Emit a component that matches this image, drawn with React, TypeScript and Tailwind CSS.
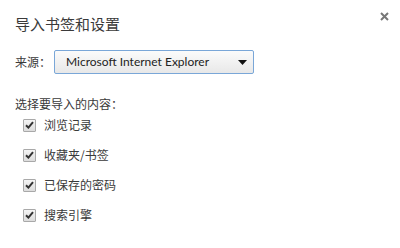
import { useState } from "react";

const items = ["浏览记录", "收藏夹/书签", "已保存的密码", "搜索引擎"];

function CheckIcon() {
  return (
    <svg width="9" height="8" viewBox="0 0 9 8" className="block">
      <path d="M1 4.2 L3.4 6.6 L8 1.2" fill="none" stroke="#333" strokeWidth="2" />
    </svg>
  );
}

export default function App() {
  const [checked, setChecked] = useState<boolean[]>([true, true, true, true]);

  const toggle = (i: number) => {
    setChecked(checked.map((c, j) => (j === i ? !c : c)));
  };

  return (
    <div className="relative w-[400px] h-[248px] bg-white text-[#3a3a3a] pt-[14px] px-[15px] font-['Noto_Sans_CJK_SC',sans-serif]">
      {/* close */}
      <button className="absolute top-[11px] right-[11px] w-[10px] h-[10px] flex items-center justify-center">
        <svg width="9" height="9" viewBox="0 0 9 9">
          <path d="M1 1 L8 8 M8 1 L1 8" stroke="#777" strokeWidth="2" />
        </svg>
      </button>

      <div className="text-[15px] leading-[20px]">导入书签和设置</div>

      {/* source */}
      <div className="mt-[16px] flex items-center h-[24px] text-[12px]">
        <span className="w-[39px]">来源：</span>
        <div className="w-[200px] h-[24px] flex items-center justify-between border border-[#7aa7d8] rounded-[2px] bg-gradient-to-b from-[#fbfbfb] to-[#e8e8e8] pl-[11px] pr-[6px]">
          <span className="text-[12px] text-[#222] font-['Lato',sans-serif]">Microsoft Internet Explorer</span>
          <svg width="9" height="5" viewBox="0 0 9 5">
            <path d="M0 0 H9 L4.5 5 Z" fill="#111" />
          </svg>
        </div>
      </div>

      <div className="mt-[22px] text-[12px] leading-[15px]">选择要导入的内容：</div>

      <div className="mt-[-1px] flex flex-col">
        {items.map((label, i) => (
          <label key={label} className="h-[30px] flex items-center pl-[8px] text-[12px] cursor-pointer">
            <span
              onClick={() => toggle(i)}
              className="w-[13px] h-[13px] flex items-center justify-center border border-[#a9a9a9] rounded-[1px] bg-gradient-to-b from-[#f4f4f4] to-[#dcdcdc]"
            >
              {checked[i] && <CheckIcon />}
            </span>
            <span className="ml-[8px]">{label}</span>
          </label>
        ))}
      </div>
    </div>
  );
}
